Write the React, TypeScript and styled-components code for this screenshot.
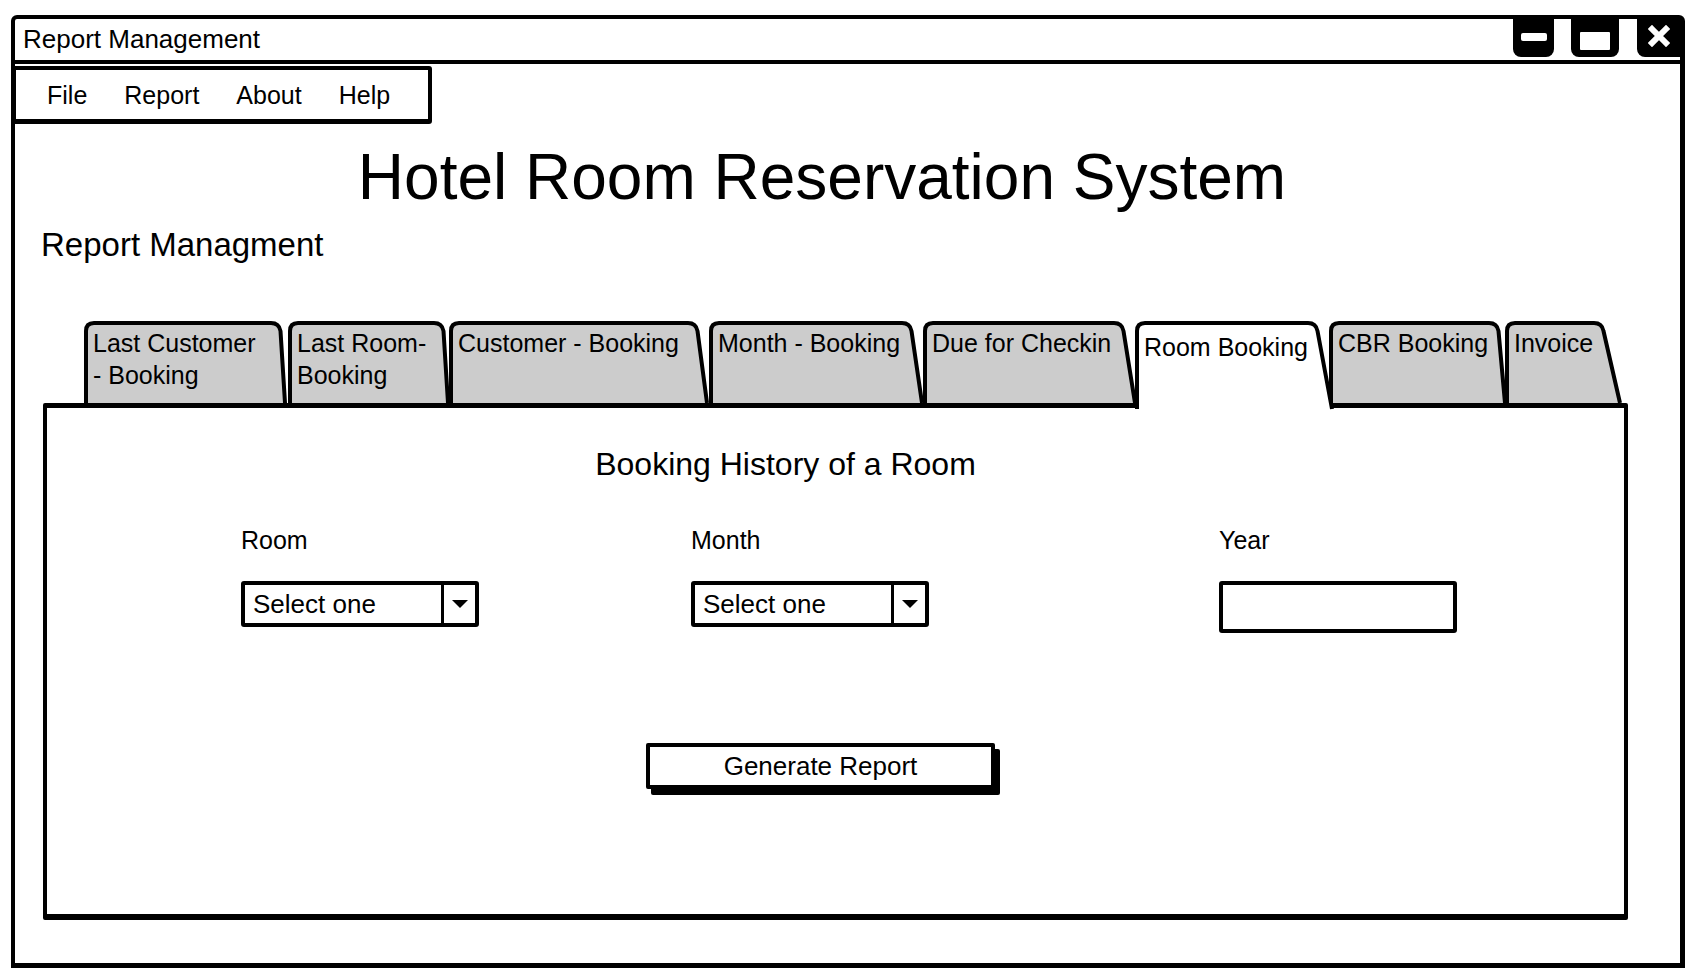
import React from "react";
import styled, { createGlobalStyle } from "styled-components";

const GlobalStyle = createGlobalStyle`
  html, body { margin: 0; padding: 0; background: #fff; }
  body { font-family: "Liberation Sans", Arial, sans-serif; color: #000; }
  * { box-sizing: border-box; }
`;

const Window = styled.div`
  margin: 15px 0 0 11px;
  width: 1674px;
  height: 953px;
  border: 4px solid #000;
  border-right-width: 5px;
  border-bottom-width: 5px;
  border-radius: 6px 6px 0 0;
  display: flex;
  flex-direction: column;
`;

const TitleBar = styled.div`
  height: 45px;
  border-bottom: 4px solid #000;
  display: flex;
  align-items: flex-start;
`;

const TitleText = styled.div`
  align-self: center;
  margin-top: -2px;
  padding-left: 8px;
  font-size: 26px;
  line-height: 30px;
`;

const Controls = styled.div`
  margin-left: auto;
  display: flex;
  gap: 17px;
`;

const CtrlButton = styled.div<{ $w: number; $close?: boolean }>`
  width: ${(p) => p.$w}px;
  height: 38px;
  background: #000;
  border-radius: ${(p) => (p.$close ? "0 0 0 8px" : "0 0 8px 8px")};
  margin-left: ${(p) => (p.$close ? 1 : 0)}px;
  display: flex;
  align-items: center;
  justify-content: center;
`;

const MinBar = styled.div`
  width: 26px;
  height: 8px;
  background: #fff;
  border-radius: 2px;
  margin-top: -2px;
`;

const MaxBox = styled.div`
  width: 30px;
  height: 18px;
  background: #fff;
  border-radius: 1px;
  margin-top: 6px;
`;

const CloseGlyph = styled.svg`
  margin-top: -4px;
`;

const MenuBar = styled.div`
  margin: 2px 0 0 -3px;
  width: 420px;
  height: 58px;
  border: 4px solid #000;
  border-bottom-width: 5px;
  border-radius: 3px;
  display: flex;
  align-items: center;
  gap: 37px;
  padding-left: 31px;
  font-size: 25px;
`;

const MenuItem = styled.span`
  line-height: 30px;
`;

const AppTitle = styled.h1`
  margin: 21px 0 0 0;
  padding-right: 51px;
  font-size: 64px;
  line-height: 64px;
  font-weight: 400;
  text-align: center;
`;

const SectionHeading = styled.h2`
  margin: 16px 0 0 0;
  padding-left: 26px;
  font-size: 33px;
  line-height: 40px;
  font-weight: 400;
`;

const TabArea = styled.div`
  margin: 56px 0 0 28px;
  width: 1585px;
`;

const TabsRow = styled.div`
  position: relative;
  z-index: 2;
  display: flex;
  height: 82px;
  margin-left: 41px;
`;

const TabItem = styled.div<{ $w: number; $active?: boolean }>`
  position: relative;
  z-index: ${(p) => (p.$active ? 2 : 1)};
  width: ${(p) => p.$w}px;
  height: 82px;
  flex: none;
`;

const TabOutline = styled.svg`
  position: absolute;
  left: 0;
  top: 0;
  overflow: visible;
`;

const TabLabel = styled.div<{ $active?: boolean }>`
  position: relative;
  padding: ${(p) => (p.$active ? "10px" : "5.5px")} 0 0 9px;
  font-size: 25px;
  line-height: 32px;
  white-space: nowrap;
`;

const Panel = styled.div`
  position: relative;
  z-index: 1;
  width: 1585px;
  height: 517px;
  border: 4px solid #000;
  border-top-width: 5px;
  border-bottom-width: 6px;
  border-radius: 2px;
  background: #fff;
`;

const PanelHeading = styled.h3`
  margin: 0;
  padding: 36px 100px 0 0;
  font-size: 32px;
  line-height: 40px;
  font-weight: 400;
  text-align: center;
`;

const FormRow = styled.div`
  margin-top: 41px;
  padding-left: 194px;
  display: grid;
  grid-template-columns: 450px 528px 1fr;
  align-items: start;
`;

const Field = styled.div`
  display: flex;
  flex-direction: column;
  gap: 26px;
`;

const FieldLabel = styled.div`
  font-size: 25px;
  line-height: 30px;
`;

const SelectBox = styled.div`
  width: 238px;
  height: 46px;
  border: 4px solid #000;
  border-radius: 3px;
  display: flex;
  align-items: stretch;
`;

const SelectValue = styled.div`
  flex: 1;
  padding-left: 8px;
  display: flex;
  align-items: center;
  font-size: 26px;
`;

const SelectArrow = styled.div`
  width: 34px;
  border-left: 3px solid #000;
  display: flex;
  align-items: center;
  justify-content: center;
  &::after {
    content: "";
    border-left: 8px solid transparent;
    border-right: 8px solid transparent;
    border-top: 8px solid #000;
  }
`;

const TextBox = styled.div`
  width: 238px;
  height: 52px;
  border: 4px solid #000;
  border-radius: 3px;
  background: #fff;
`;

const ButtonRow = styled.div`
  margin-top: 110px;
  padding-left: 599px;
`;

const ActionButton = styled.button`
  width: 349px;
  height: 46px;
  padding: 0;
  background: #fff;
  border: 4px solid #000;
  border-radius: 2px;
  box-shadow: 5px 6px 0 #000;
  font-family: inherit;
  font-size: 26px;
  color: #000;
`;

type TabDef = {
  lines: string[];
  w: number;
  top: number;
  bottom: number;
  active?: boolean;
};

const tabs: TabDef[] = [
  { lines: ["Last Customer", "- Booking"], w: 204, top: 195, bottom: 201 },
  { lines: ["Last Room-", "Booking"], w: 161, top: 154, bottom: 160 },
  { lines: ["Customer  - Booking"], w: 260, top: 247, bottom: 258 },
  { lines: ["Month - Booking"], w: 214, top: 201, bottom: 213 },
  { lines: ["Due for Checkin"], w: 212, top: 199, bottom: 212 },
  { lines: ["Room Booking"], w: 194, top: 181, bottom: 197, active: true },
  { lines: ["CBR Booking"], w: 176, top: 168, bottom: 176 },
  { lines: ["Invoice"], w: 117, top: 97, bottom: 115 },
];

function Tab({ def }: { def: TabDef }) {
  const h = def.active ? 88 : 82;
  const r = 8;
  const d = `M 2 ${h} L 2 ${r + 2} Q 2 2 ${r + 2} 2 L ${def.top - r} 2 Q ${def.top} 2 ${def.top + 1.5} ${r + 2} L ${def.bottom} ${h}`;
  return (
    <TabItem $w={def.w} $active={def.active}>
      <TabOutline width={def.w} height={h} viewBox={`0 0 ${def.w} ${h}`}>
        <path
          d={d}
          fill={def.active ? "#ffffff" : "#cccccc"}
          stroke="#000"
          strokeWidth={4}
          strokeLinejoin="round"
        />
      </TabOutline>
      <TabLabel $active={def.active}>
        {def.lines.map((l, i) => (
          <div key={i}>{l}</div>
        ))}
      </TabLabel>
    </TabItem>
  );
}

function Select() {
  return (
    <SelectBox>
      <SelectValue>Select one</SelectValue>
      <SelectArrow />
    </SelectBox>
  );
}

export default function App() {
  return (
    <>
      <GlobalStyle />
      <Window>
        <TitleBar>
          <TitleText>Report Management</TitleText>
          <Controls>
            <CtrlButton $w={41}>
              <MinBar />
            </CtrlButton>
            <CtrlButton $w={48}>
              <MaxBox />
            </CtrlButton>
            <CtrlButton $w={43} $close>
              <CloseGlyph width="22" height="22" viewBox="0 0 22 22">
                <path d="M4 4 L18 18 M18 4 L4 18" stroke="#fff" strokeWidth="6" strokeLinecap="square" />
              </CloseGlyph>
            </CtrlButton>
          </Controls>
        </TitleBar>
        <MenuBar>
          <MenuItem>File</MenuItem>
          <MenuItem>Report</MenuItem>
          <MenuItem>About</MenuItem>
          <MenuItem>Help</MenuItem>
        </MenuBar>
        <AppTitle>Hotel Room Reservation System</AppTitle>
        <SectionHeading>Report Managment</SectionHeading>
        <TabArea>
          <TabsRow>
            {tabs.map((t, i) => (
              <Tab key={i} def={t} />
            ))}
          </TabsRow>
          <Panel>
            <PanelHeading>Booking History of a Room</PanelHeading>
            <FormRow>
              <Field>
                <FieldLabel>Room</FieldLabel>
                <Select />
              </Field>
              <Field>
                <FieldLabel>Month</FieldLabel>
                <Select />
              </Field>
              <Field>
                <FieldLabel>Year</FieldLabel>
                <TextBox />
              </Field>
            </FormRow>
            <ButtonRow>
              <ActionButton>Generate Report</ActionButton>
            </ButtonRow>
          </Panel>
        </TabArea>
      </Window>
    </>
  );
}
